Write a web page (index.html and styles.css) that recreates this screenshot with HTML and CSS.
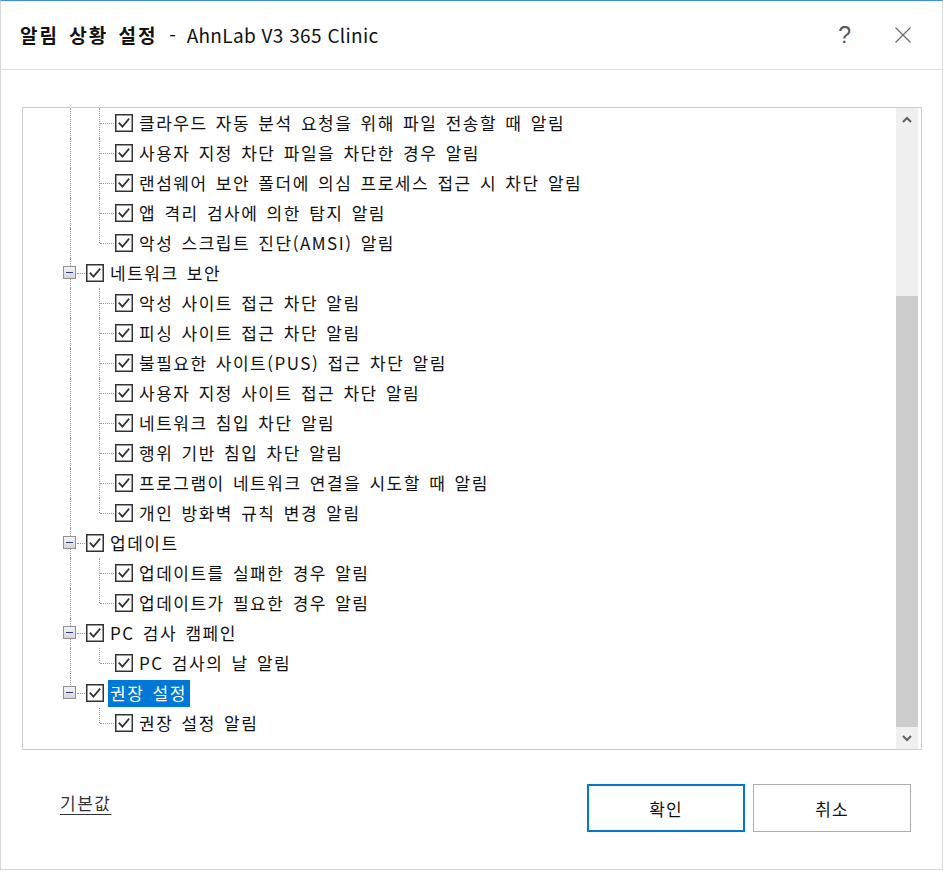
FILE: index.html
```html
<!DOCTYPE html>
<html lang="ko">
<head>
  <meta charset="UTF-8">
  <title>알림 상황 설정 - AhnLab V3 365 Clinic</title>
  <link rel="stylesheet" href="styles.css">
</head>
<body>

<svg width="0" height="0" class="defs">
  <symbol id="chk" viewBox="0 0 18 18">
    <rect x="0.75" y="0.75" width="16.5" height="16.5" fill="#fff" stroke="#333" stroke-width="1.5"/>
    <polyline points="3.8,8.6 7.4,12.6 14.2,4.6" fill="none" stroke="#333" stroke-width="1.7"/>
  </symbol>
</svg>

<div class="window">
  <div class="titlebar">
    <div class="title"><b>알림 상황 설정</b> - <span class="app">AhnLab V3 365 Clinic</span></div>
    <div class="title-btns">
      <span class="help">?</span>
      <svg class="close" width="16" height="16" viewBox="0 0 16 16">
        <path d="M0.5 0.5 L15.5 15.5 M15.5 0.5 L0.5 15.5" stroke="#6b6b6b" stroke-width="1.2" fill="none"/>
      </svg>
    </div>
  </div>

  <div class="content">
    <div class="treebox">
      <div class="tree">
        <!-- 실시간 검사 그룹 (위쪽은 스크롤 됨) -->
        <div class="row"><span class="ln v"></span><span class="ln tee"></span><svg class="cb"><use href="#chk"/></svg><span class="lbl">클라우드 자동 분석 요청을 위해 파일 전송할 때 알림</span></div>
        <div class="row"><span class="ln v"></span><span class="ln tee"></span><svg class="cb"><use href="#chk"/></svg><span class="lbl">사용자 지정 차단 파일을 차단한 경우 알림</span></div>
        <div class="row"><span class="ln v"></span><span class="ln tee"></span><svg class="cb"><use href="#chk"/></svg><span class="lbl">랜섬웨어 보안 폴더에 의심 프로세스 접근 시 차단 알림</span></div>
        <div class="row"><span class="ln v"></span><span class="ln tee"></span><svg class="cb"><use href="#chk"/></svg><span class="lbl">앱 격리 검사에 의한 탐지 알림</span></div>
        <div class="row"><span class="ln v"></span><span class="ln elbow"></span><svg class="cb"><use href="#chk"/></svg><span class="lbl">악성 스크립트 진단(AMSI) 알림</span></div>

        <div class="row"><span class="ln exp"><i class="box"></i></span><svg class="cb"><use href="#chk"/></svg><span class="lbl">네트워크 보안</span></div>
        <div class="row"><span class="ln v"></span><span class="ln tee"></span><svg class="cb"><use href="#chk"/></svg><span class="lbl">악성 사이트 접근 차단 알림</span></div>
        <div class="row"><span class="ln v"></span><span class="ln tee"></span><svg class="cb"><use href="#chk"/></svg><span class="lbl">피싱 사이트 접근 차단 알림</span></div>
        <div class="row"><span class="ln v"></span><span class="ln tee"></span><svg class="cb"><use href="#chk"/></svg><span class="lbl">불필요한 사이트(PUS) 접근 차단 알림</span></div>
        <div class="row"><span class="ln v"></span><span class="ln tee"></span><svg class="cb"><use href="#chk"/></svg><span class="lbl">사용자 지정 사이트 접근 차단 알림</span></div>
        <div class="row"><span class="ln v"></span><span class="ln tee"></span><svg class="cb"><use href="#chk"/></svg><span class="lbl">네트워크 침입 차단 알림</span></div>
        <div class="row"><span class="ln v"></span><span class="ln tee"></span><svg class="cb"><use href="#chk"/></svg><span class="lbl">행위 기반 침입 차단 알림</span></div>
        <div class="row"><span class="ln v"></span><span class="ln tee"></span><svg class="cb"><use href="#chk"/></svg><span class="lbl">프로그램이 네트워크 연결을 시도할 때 알림</span></div>
        <div class="row"><span class="ln v"></span><span class="ln elbow"></span><svg class="cb"><use href="#chk"/></svg><span class="lbl">개인 방화벽 규칙 변경 알림</span></div>

        <div class="row"><span class="ln exp"><i class="box"></i></span><svg class="cb"><use href="#chk"/></svg><span class="lbl">업데이트</span></div>
        <div class="row"><span class="ln v"></span><span class="ln tee"></span><svg class="cb"><use href="#chk"/></svg><span class="lbl">업데이트를 실패한 경우 알림</span></div>
        <div class="row"><span class="ln v"></span><span class="ln elbow"></span><svg class="cb"><use href="#chk"/></svg><span class="lbl">업데이트가 필요한 경우 알림</span></div>

        <div class="row"><span class="ln exp"><i class="box"></i></span><svg class="cb"><use href="#chk"/></svg><span class="lbl">PC 검사 캠페인</span></div>
        <div class="row"><span class="ln v"></span><span class="ln elbow"></span><svg class="cb"><use href="#chk"/></svg><span class="lbl">PC 검사의 날 알림</span></div>

        <div class="row"><span class="ln exp last"><i class="box"></i></span><svg class="cb"><use href="#chk"/></svg><span class="lbl selected">권장 설정</span></div>
        <div class="row"><span class="ln"></span><span class="ln elbow"></span><svg class="cb"><use href="#chk"/></svg><span class="lbl">권장 설정 알림</span></div>
      </div>

      <div class="scrollbar">
        <div class="sb-btn">
          <svg width="10" height="7" viewBox="0 0 10 7"><path d="M1 6 L5 2 L9 6" stroke="#606060" stroke-width="2" fill="none"/></svg>
        </div>
        <div class="sb-track"></div>
        <div class="sb-thumb"></div>
        <div class="sb-btn">
          <svg width="10" height="7" viewBox="0 0 10 7"><path d="M1 1 L5 5 L9 1" stroke="#606060" stroke-width="2" fill="none"/></svg>
        </div>
      </div>
    </div>
  </div>

  <div class="footer">
    <a class="default-link" href="#">기본값</a>
    <div class="btns">
      <button class="btn primary">확인</button>
      <button class="btn">취소</button>
    </div>
  </div>
</div>

</body>
</html>
```

FILE: styles.css
```css
body {
  margin: 0;
  background: #fff;
  font-family: "Noto Sans CJK KR", "Noto Sans", sans-serif;
  color: #000;
}

.defs {
  position: absolute;
}

.window {
  width: 941px;
  height: 868px;
  border: 1px solid #d6d6d6;
  border-top: 1px solid #3d8ee0;
  display: flex;
  flex-direction: column;
  background: #fff;
}

/* 제목 표시줄 */
.titlebar {
  height: 68px;
  border-bottom: 1px solid #dcdcdc;
  display: flex;
  align-items: center;
  justify-content: space-between;
  padding: 0 31px 0 19px;
}

.title {
  font-size: 19px;
  color: #111;
  letter-spacing: 0.3px;
  margin-top: -1px;
}

.title b {
  font-weight: 700;
  letter-spacing: 2px;
  word-spacing: 3px;
  margin-right: 6px;
}

.title .app {
  margin-left: 5px;
}

.title-btns {
  display: flex;
  align-items: center;
  gap: 44px;
}

.help {
  font-size: 23px;
  font-weight: 300;
  color: #555;
  font-family: "Liberation Sans", sans-serif;
}

.close {
  display: block;
}

/* 트리 영역 */
.content {
  padding: 37px 20px 0 21px;
}

.treebox {
  height: 641px;
  border: 1px solid #cdcdcd;
  display: flex;
  overflow: hidden;
}

.tree {
  flex: 1;
  padding-left: 33px;
}

.row {
  height: 30px;
  display: flex;
  align-items: center;
  font-size: 17px;
  letter-spacing: 1.5px;
  word-spacing: 2px;
  white-space: nowrap;
  color: #111;
}

.ln {
  width: 29px;
  height: 30px;
  position: relative;
  flex-shrink: 0;
}

.ln.v::before,
.ln.tee::before,
.ln.elbow::before,
.ln.exp::before {
  content: "";
  position: absolute;
  left: 14px;
  top: 0;
  bottom: 0;
  border-left: 1px dotted #9a9a9a;
}

.ln.elbow::before,
.ln.exp.last::before {
  bottom: 15px;
}

.ln.tee::after,
.ln.elbow::after,
.ln.exp::after {
  content: "";
  position: absolute;
  left: 15px;
  right: 0;
  top: 15px;
  border-top: 1px dotted #9a9a9a;
}

.ln.exp::after {
  left: 21px;
}

.box {
  position: absolute;
  left: 7px;
  top: 8px;
  width: 13px;
  height: 13px;
  box-sizing: border-box;
  border: 1px solid #919191;
  background: linear-gradient(#f4f4f4, #d6d6d6);
  z-index: 1;
}

.box::after {
  content: "";
  position: absolute;
  left: 2px;
  right: 2px;
  top: 5px;
  height: 1px;
  background: #2c3f8a;
}

.cb {
  width: 18px;
  height: 18px;
  margin-left: 1px;
  flex-shrink: 0;
}

.lbl {
  margin-left: 4px;
  padding: 0 3px 0 2px;
  height: 27px;
  line-height: 26px;
}

.lbl.selected {
  background: #0078d7;
  color: #fff;
}

/* 스크롤바 */
.scrollbar {
  width: 22px;
  margin-right: 3px;
  display: flex;
  flex-direction: column;
  background: #f0f0f0;
}

.sb-btn {
  height: 22px;
  display: flex;
  align-items: center;
  justify-content: center;
}

.sb-track {
  height: 166px;
}

.sb-thumb {
  flex: 1;
  background: #cdcdcd;
}

/* 하단 버튼 */
.footer {
  flex: 1;
  display: flex;
  align-items: flex-start;
  justify-content: space-between;
  padding: 34px 31px 0 59px;
}

.default-link {
  color: #333;
  font-size: 17px;
  letter-spacing: 1.5px;
  margin-top: 6px;
  text-underline-offset: 4px;
}

.btns {
  display: flex;
  gap: 8px;
}

.btn {
  width: 158px;
  height: 48px;
  background: #fff;
  border: 1px solid #adadad;
  font-family: "Noto Sans CJK KR", sans-serif;
  font-size: 17px;
  letter-spacing: 1px;
  color: #111;
}

.btn.primary {
  border: 2px solid #0078d7;
}
```
